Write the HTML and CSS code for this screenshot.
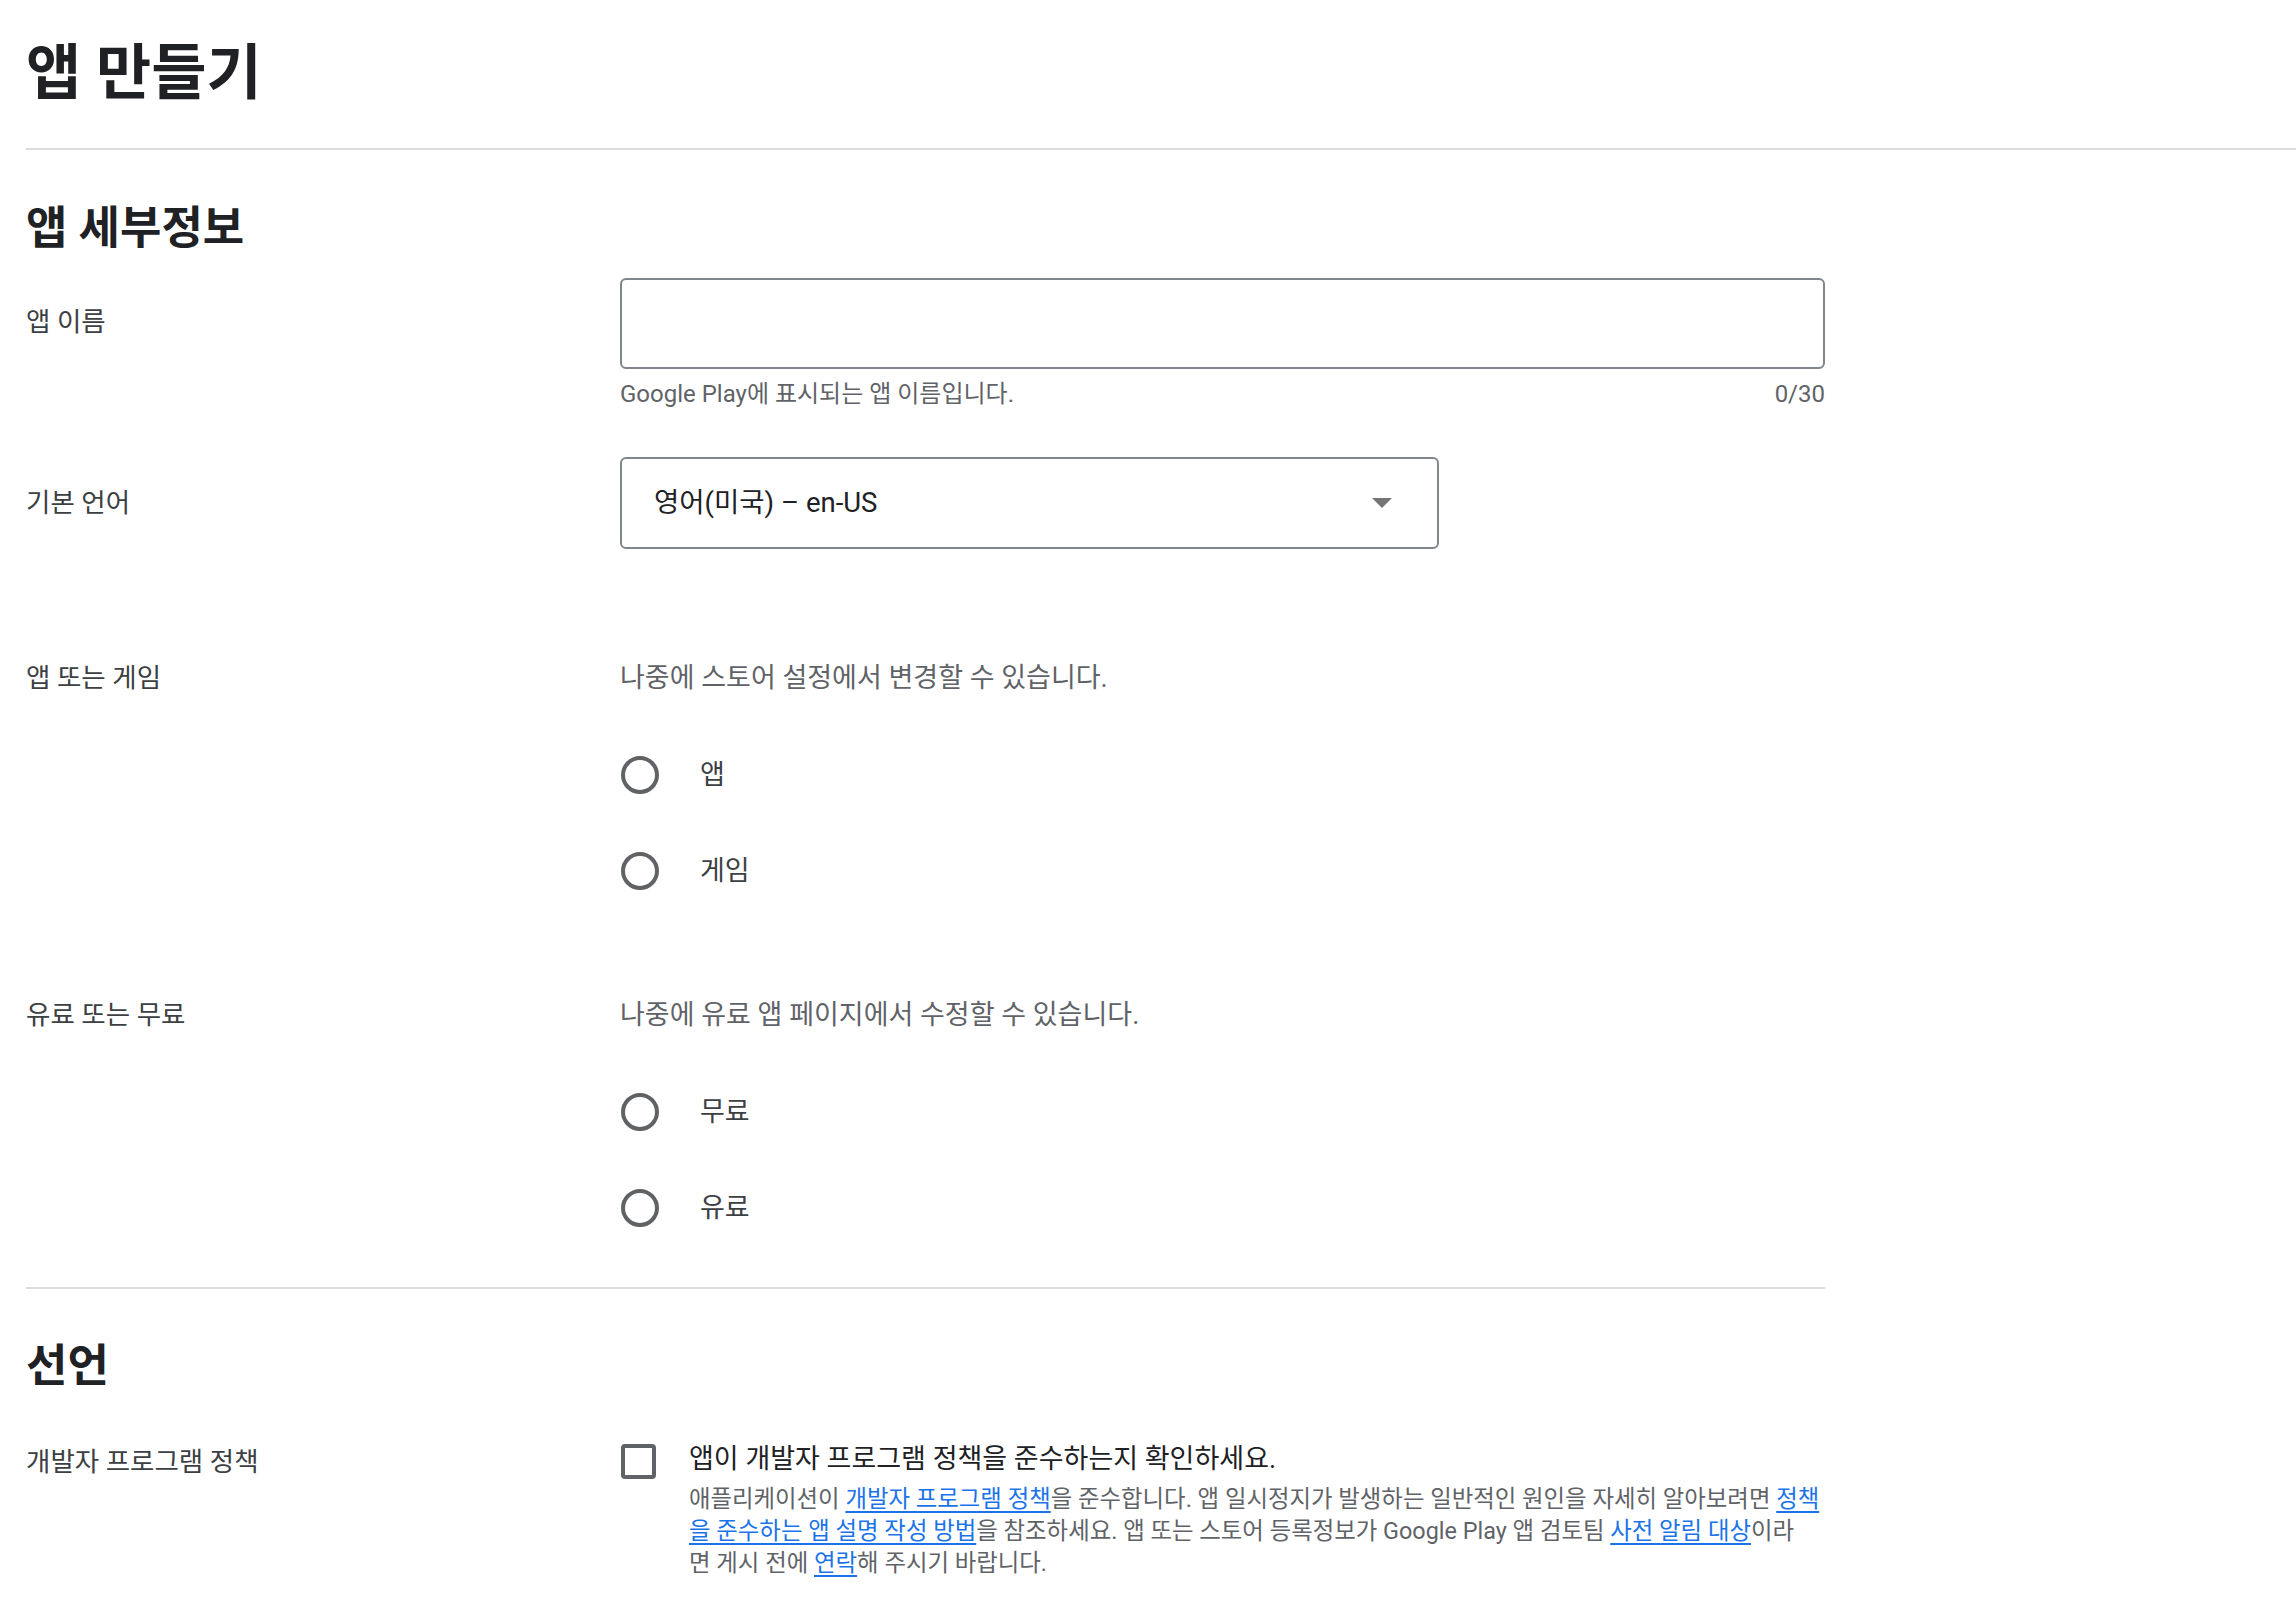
FILE: index.html
```html
<!DOCTYPE html>
<html lang="ko">
<head>
<meta charset="utf-8">
<title>앱 만들기</title>
<link rel="stylesheet" href="styles.css">
</head>
<body>
<main class="page">
  <header class="page-header">
    <h1 class="page-title">앱 만들기</h1>
  </header>

  <section class="section section-details">
    <h2 class="section-title">앱 세부정보</h2>

    <div class="field-row row-name">
      <div class="field-label label-name">앱 이름</div>
      <div class="field-control">
        <div class="text-input"></div>
        <div class="hint-row">
          <span>Google Play에 표시되는 앱 이름입니다.</span>
          <span>0/30</span>
        </div>
      </div>
    </div>

    <div class="field-row row-lang">
      <div class="field-label label-lang">기본 언어</div>
      <div class="field-control control-narrow">
        <div class="select">
          <span class="select-value">영어(미국) – en-US</span>
          <svg class="select-arrow" width="20" height="10" viewBox="0 0 20 10"><polygon points="0,0 20,0 10,10" fill="#757575"/></svg>
        </div>
      </div>
    </div>

    <div class="field-row row-type">
      <div class="field-label">앱 또는 게임</div>
      <div class="field-control">
        <p class="field-desc">나중에 스토어 설정에서 변경할 수 있습니다.</p>
        <div class="radio-group">
          <div class="radio-row"><span class="radio"></span><span class="radio-label">앱</span></div>
          <div class="radio-row"><span class="radio"></span><span class="radio-label">게임</span></div>
        </div>
      </div>
    </div>

    <div class="field-row row-price">
      <div class="field-label">유료 또는 무료</div>
      <div class="field-control">
        <p class="field-desc">나중에 유료 앱 페이지에서 수정할 수 있습니다.</p>
        <div class="radio-group">
          <div class="radio-row"><span class="radio"></span><span class="radio-label">무료</span></div>
          <div class="radio-row"><span class="radio"></span><span class="radio-label">유료</span></div>
        </div>
      </div>
    </div>
  </section>

  <section class="section section-decl">
    <h2 class="section-title">선언</h2>

    <div class="field-row row-policy">
      <div class="field-label label-policy">개발자 프로그램 정책</div>
      <div class="field-control">
        <div class="check-row">
          <span class="checkbox"></span>
          <div class="check-body">
            <div class="check-title">앱이 개발자 프로그램 정책을 준수하는지 확인하세요.</div>
            <p class="check-text">애플리케이션이 <a href="#">개발자 프로그램 정책</a>을 준수합니다. 앱 일시정지가 발생하는 일반적인 원인을 자세히 알아보려면 <a href="#">정책<br>을 준수하는 앱 설명 작성 방법</a>을 참조하세요. 앱 또는 스토어 등록정보가 Google Play 앱 검토팀 <a href="#">사전 알림 대상</a>이라<br>면 게시 전에 <a href="#">연락</a>해 주시기 바랍니다.</p>
          </div>
        </div>
      </div>
    </div>
  </section>
</main>
</body>
</html>
```

FILE: styles.css
```css
* {
  box-sizing: border-box;
}

html, body {
  margin: 0;
  padding: 0;
  background: #ffffff;
}

body {
  font-family: Roboto, "Noto Sans CJK KR", sans-serif;
  color: #202124;
}

.page {
  padding-left: 26px;
}

.page-header {
  padding-top: 34px;
  padding-bottom: 34px;
  border-bottom: 2px solid #dadce0;
}

.page-title {
  margin: 0;
  font-size: 60px;
  line-height: 80px;
  font-weight: 700;
  color: #202124;
}

.section {
  width: 1799px;
}

.section-details {
  padding-bottom: 31px;
  border-bottom: 2px solid #dadce0;
}

.section-title {
  margin: 51px 0 0 0;
  font-size: 45px;
  line-height: 56px;
  font-weight: 700;
  color: #202124;
}

.section-decl .section-title {
  margin-top: 50px;
}

.field-row {
  display: grid;
  grid-template-columns: 594px 1205px;
}

.row-name { margin-top: 21px; }
.row-lang { margin-top: 49px; }
.row-type { margin-top: 113px; }
.row-price { margin-top: 80px; }
.row-policy { margin-top: 48px; }

.field-label {
  font-size: 26.5px;
  line-height: 32px;
  color: #3c4043;
}

.label-name { padding-top: 28px; }
.label-lang { padding-top: 30px; }
.label-policy { padding-top: 3px; }

.text-input {
  height: 91px;
  border: 2px solid #80868b;
  border-radius: 6px;
}

.hint-row {
  display: flex;
  justify-content: space-between;
  margin-top: 11px;
  font-size: 24px;
  line-height: 28px;
  color: #5f6368;
}

.control-narrow .select {
  width: 819px;
}

.select {
  height: 92px;
  border: 2px solid #80868b;
  border-radius: 6px;
  display: flex;
  align-items: center;
  justify-content: space-between;
  padding: 0 45px 0 32px;
}

.select-value {
  font-size: 27.5px;
  line-height: 32px;
  color: #202124;
}

.select-arrow {
  display: block;
}

.field-desc {
  margin: 0;
  font-size: 27px;
  line-height: 32px;
  color: #5f6368;
}

.radio-group {
  margin-top: 33px;
}

.radio-row {
  height: 96px;
  display: flex;
  align-items: center;
}

.radio {
  width: 38px;
  height: 38px;
  border: 4px solid #5f6368;
  border-radius: 50%;
  margin-left: 1px;
}

.radio-label {
  margin-left: 41px;
  font-size: 27px;
  line-height: 32px;
  color: #3c4043;
}

.check-row {
  display: flex;
  align-items: flex-start;
}

.checkbox {
  flex: none;
  width: 35px;
  height: 35px;
  margin: 1px 0 0 1px;
  border: 4px solid #5f6368;
  border-radius: 4px;
}

.check-body {
  margin-left: 33px;
}

.check-title {
  font-size: 27px;
  line-height: 32px;
  color: #202124;
}

.check-text {
  margin: 8px 0 0 0;
  font-size: 23.4px;
  line-height: 32px;
  color: #5f6368;
  white-space: nowrap;
}

.check-text a {
  color: #1a73e8;
  text-decoration: underline;
  text-decoration-thickness: 2px;
  text-underline-offset: 4px;
}
```
